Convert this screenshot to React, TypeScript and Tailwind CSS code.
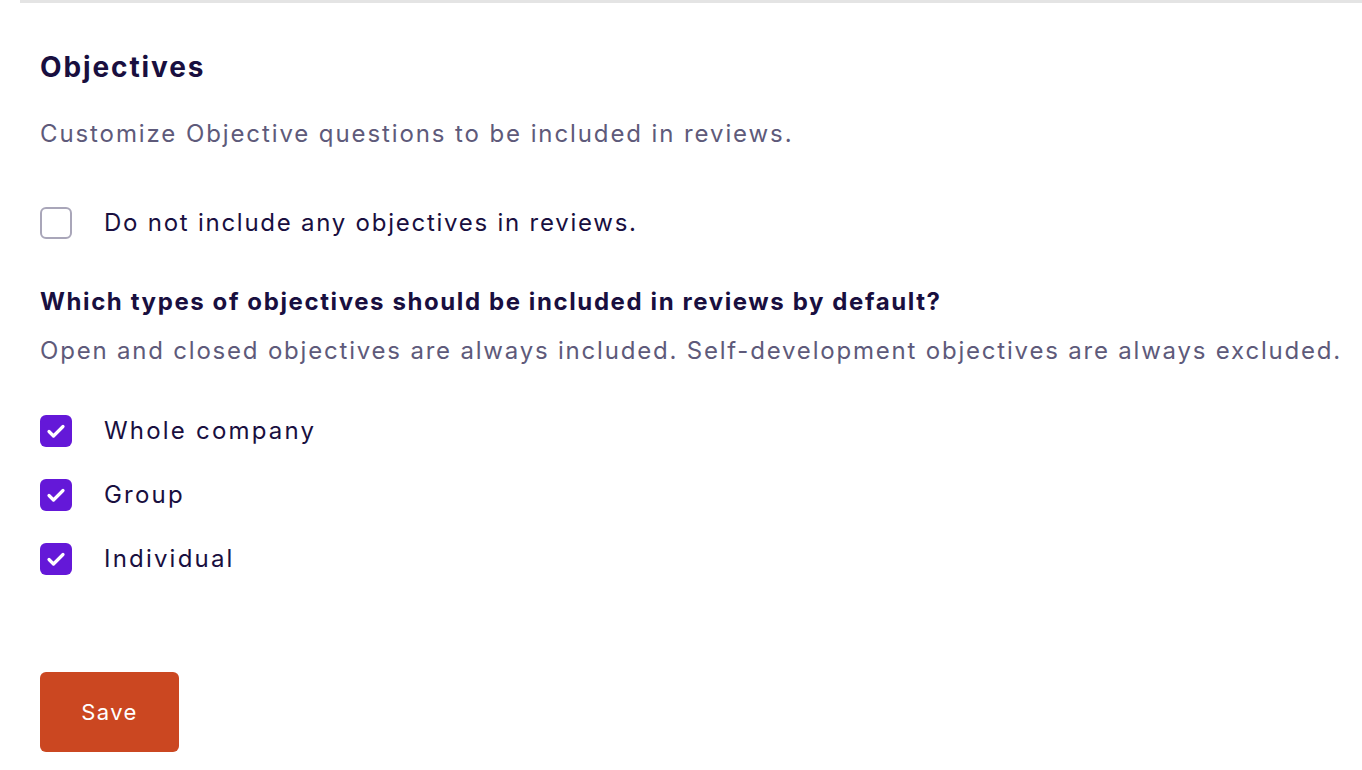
import React, { useState } from 'react';

type Kind = 'company' | 'group' | 'individual';

const KINDS: { id: Kind; label: string }[] = [
  { id: 'company', label: 'Whole company' },
  { id: 'group', label: 'Group' },
  { id: 'individual', label: 'Individual' },
];

const Box: React.FC<{ checked: boolean; onClick: () => void }> = ({ checked, onClick }) => (
  <button
    type="button"
    onClick={onClick}
    className={`w-8 h-8 rounded-md flex items-center justify-center shrink-0 ${
      checked ? 'bg-[#6418d8]' : 'bg-white border-2 border-[#a9a6b9]'
    }`}
  >
    {checked && (
      <svg width="24" height="24" viewBox="0 0 24 24" fill="none">
        <path d="M5 12.5l4.5 4.5L19 7.5" stroke="white" strokeWidth="3.2" strokeLinecap="round" strokeLinejoin="round" />
      </svg>
    )}
  </button>
);

const App: React.FC = () => {
  const [noObjectives, setNoObjectives] = useState(false);
  const [kinds, setKinds] = useState<Record<Kind, boolean>>({ company: true, group: true, individual: true });

  const toggle = (k: Kind) => setKinds(prev => ({ ...prev, [k]: !prev[k] }));

  return (
    <div className="min-h-screen bg-white pl-5 font-['Inter',sans-serif]">
      <div className="h-[3px] bg-[#e4e4e4]" />
      <div className="pl-5 pt-[46px]">
        <h2 className="text-[28px] leading-[36px] font-bold tracking-[1.9px] text-[#190f3f]">Objectives</h2>
        <p className="mt-[33px] text-[24px] leading-[32px] tracking-[1.9px] text-[#5e5a7a]">
          Customize Objective questions to be included in reviews.
        </p>

        <label className="mt-[57px] flex items-center gap-8 cursor-pointer">
          <Box checked={noObjectives} onClick={() => setNoObjectives(v => !v)} />
          <span className="text-[24px] leading-[32px] tracking-[1.75px] text-[#190f3f]">
            Do not include any objectives in reviews.
          </span>
        </label>

        <h3 className="mt-[47px] text-[24px] leading-[32px] font-bold tracking-[1.6px] text-[#190f3f]">
          Which types of objectives should be included in reviews by default?
        </h3>
        <p className="mt-[17px] text-[24px] leading-[32px] tracking-[1.8px] text-[#5e5a7a] whitespace-nowrap">
          Open and closed objectives are always included. Self-development objectives are always excluded.
        </p>

        <div className="mt-[48px] flex flex-col gap-8">
          {KINDS.map(k => (
            <label key={k.id} className="flex items-center gap-8 cursor-pointer">
              <Box checked={kinds[k.id]} onClick={() => toggle(k.id)} />
              <span className="text-[24px] leading-[32px] tracking-[2.2px] text-[#190f3f]">{k.label}</span>
            </label>
          ))}
        </div>

        <button
          type="button"
          className="mt-[97px] w-[139px] h-[80px] rounded-md bg-[#cb4721] text-white text-[22px] tracking-[1.4px]"
        >
          Save
        </button>
      </div>
    </div>
  );
};

export default App;
